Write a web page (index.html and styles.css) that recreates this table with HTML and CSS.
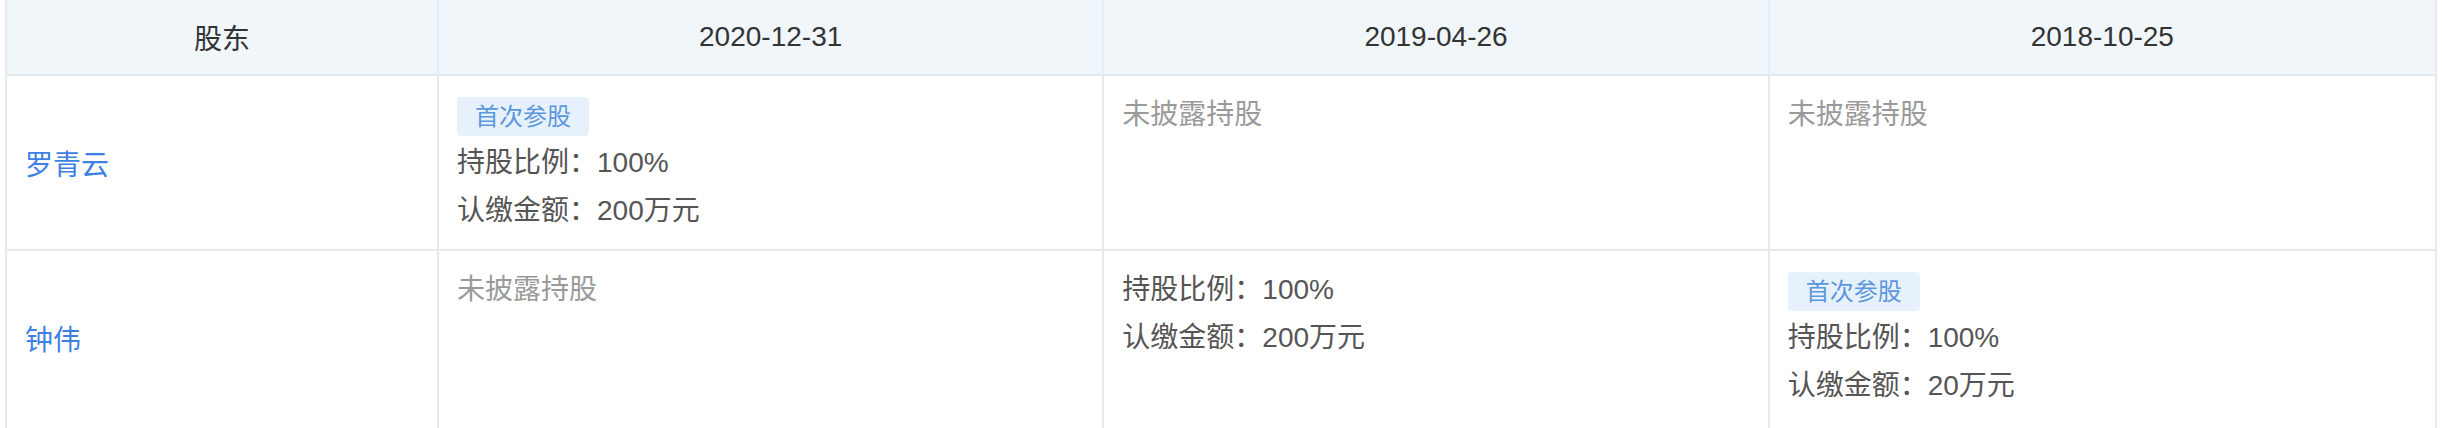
FILE: index.html
```html
<!DOCTYPE html>
<html lang="zh-CN">
<head>
<meta charset="utf-8">
<title>股东持股</title>
<link rel="stylesheet" href="styles.css">
</head>
<body>
<div class="wrap">
  <div class="table">
    <div class="th">股东</div>
    <div class="th">2020-12-31</div>
    <div class="th">2019-04-26</div>
    <div class="th th-last">2018-10-25</div>

    <div class="td name"><a class="link">罗青云</a></div>
    <div class="td">
      <div class="line"><span class="tag">首次参股</span></div>
      <div class="line">持股比例：100%</div>
      <div class="line">认缴金额：200万元</div>
    </div>
    <div class="td"><div class="line muted">未披露持股</div></div>
    <div class="td td-last"><div class="line muted">未披露持股</div></div>

    <div class="td name row-last"><a class="link">钟伟</a></div>
    <div class="td row-last"><div class="line muted">未披露持股</div></div>
    <div class="td row-last">
      <div class="line">持股比例：100%</div>
      <div class="line">认缴金额：200万元</div>
    </div>
    <div class="td td-last row-last">
      <div class="line"><span class="tag">首次参股</span></div>
      <div class="line">持股比例：100%</div>
      <div class="line">认缴金额：20万元</div>
    </div>
  </div>
</div>
</body>
</html>
```
FILE: styles.css
```css
html, body {
  margin: 0;
  padding: 0;
  background: #ffffff;
}
body {
  font-family: "Liberation Sans", "Noto Sans CJK SC", sans-serif;
  font-size: 28px;
  color: #555555;
}
.wrap {
  padding: 0 5px;
}
.table {
  display: grid;
  grid-template-columns: 432px 1fr 1fr 1fr;
  border-left: 2px solid #e6e9ed;
  border-right: 2px solid #e6e9ed;
}
.th {
  height: 74px;
  background: #f1f6fb;
  color: #333333;
  display: flex;
  align-items: center;
  justify-content: center;
  border-right: 2px solid #e6eef6;
  border-bottom: 2px solid #e3e8ee;
}
.th-last {
  border-right: none;
}
.td {
  box-sizing: border-box;
  height: 175px;
  padding: 15px 18px 0;
  border-right: 2px solid #e6e9ee;
  border-bottom: 2px solid #e6e9ee;
}
.td-last {
  border-right: none;
}
.row-last {
  border-bottom: none;
  height: 180px;
}
.name {
  display: flex;
  align-items: center;
  padding-top: 0;
}
.name.row-last {
  height: 180px;
  padding-bottom: 7px;
}
.link {
  color: #3d7fe3;
  text-decoration: none;
}
.line {
  height: 48px;
  line-height: 48px;
  white-space: nowrap;
}
.muted {
  color: #9a9a9a;
}
.tag {
  display: inline-block;
  vertical-align: middle;
  height: 39px;
  line-height: 39px;
  padding: 0 18px;
  font-size: 24px;
  color: #5b97de;
  background: #e7f1fc;
  border-radius: 4px;
}
```
